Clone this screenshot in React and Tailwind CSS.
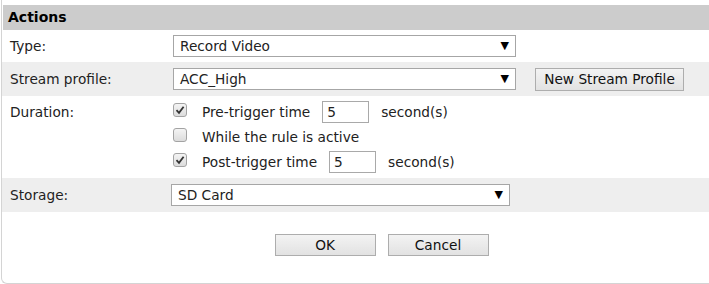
import React from 'react';

function SelectBox({ value, className = '' }) {
  return (
    <div className={`flex items-center justify-between h-[22px] bg-white border border-[#a6a6a6] pl-[6px] pr-[6px] ${className}`}>
      <span>{value}</span>
      <span className="text-[11px] text-black">▼</span>
    </div>
  );
}

function Checkbox({ checked }) {
  return (
    <div className="w-[14px] h-[14px] rounded-[3px] border border-[#a3a3a3] bg-gradient-to-b from-[#f4f4f4] to-[#dcdcdc] flex items-center justify-center mb-[4px] mr-[15px]">
      {checked && (
        <svg width="10" height="10" viewBox="0 0 10 10">
          <path d="M1.5 5.2 L4 7.8 L8.6 1.8" fill="none" stroke="#333" strokeWidth="1.8" />
        </svg>
      )}
    </div>
  );
}

function Button({ children, className = '' }) {
  return (
    <button className={`h-[22px] border border-[#adadad] bg-gradient-to-b from-[#f3f3f3] to-[#e2e2e2] text-[#111] ${className}`}>
      {children}
    </button>
  );
}

export default function App() {
  return (
    <div className="w-[709px] h-[284px] overflow-hidden bg-white text-[13.7px] text-[#222]" style={{ fontFamily: '"DejaVu Sans", Verdana, sans-serif' }}>
      <div className="ml-px w-[760px] border-l border-b border-[#d4d4d4] rounded-bl-[6px] pt-[5px] pb-[27px]">
        {/* Header */}
        <div className="ml-px h-[25px] bg-[#cccccc] flex items-center pl-[5px] font-bold text-[14px] text-black">
          Actions
        </div>

        {/* Type */}
        <div className="flex items-center h-[32px]">
          <div className="w-[171px] pl-[8px]">Type:</div>
          <SelectBox value="Record Video" className="w-[343px]" />
        </div>

        {/* Stream profile */}
        <div className="flex items-center h-[34px] bg-[#eeeeee]">
          <div className="w-[171px] pl-[8px]">Stream profile:</div>
          <SelectBox value="ACC_High" className="w-[343px]" />
          <Button className="ml-[19px] w-[149px] h-[23px]">New Stream Profile</Button>
        </div>

        {/* Duration */}
        <div className="flex pt-[4px] pb-[4px]">
          <div className="w-[171px] pl-[8px] h-[24px] flex items-center">Duration:</div>
          <div className="flex flex-col gap-[1px]">
            <div className="flex items-center h-[24px]">
              <Checkbox checked />
              <span>Pre-trigger time</span>
              <div className="ml-[12px] w-[47px] h-[22px] border border-[#a9a9a9] bg-white flex items-center pl-[4px]">5</div>
              <span className="ml-[12px]">second(s)</span>
            </div>
            <div className="flex items-center h-[24px]">
              <Checkbox />
              <span>While the rule is active</span>
            </div>
            <div className="flex items-center h-[24px]">
              <Checkbox checked />
              <span>Post-trigger time</span>
              <div className="ml-[12px] w-[47px] h-[22px] border border-[#a9a9a9] bg-white flex items-center pl-[4px]">5</div>
              <span className="ml-[12px]">second(s)</span>
            </div>
          </div>
        </div>

        {/* Storage */}
        <div className="flex items-center h-[34px] bg-[#eeeeee]">
          <div className="w-[169px] pl-[8px]">Storage:</div>
          <SelectBox value="SD Card" className="w-[339px]" />
        </div>

        {/* Buttons */}
        <div className="flex justify-center gap-[12px] pt-[22px]">
          <Button className="w-[101px]">OK</Button>
          <Button className="w-[101px]">Cancel</Button>
        </div>
      </div>
    </div>
  );
}
